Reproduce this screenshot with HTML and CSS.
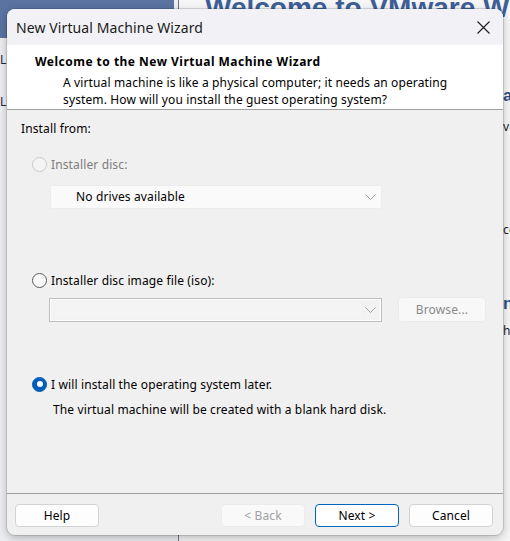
FILE: index.html
```html
<!DOCTYPE html>
<html>
<head>
<meta charset="utf-8">
<link rel="stylesheet" href="styles.css">
</head>
<body>
<div class="app">
  <aside class="sidebar">
    <div class="side-head"></div>
    <div class="side-item s1">Library</div>
    <div class="side-item s2">Library</div>
  </aside>
  <main class="home">
    <h1 class="home-title">Welcome to VMware Workstation</h1>
    <div class="home-col">
      <div class="frag-h f1">about</div>
      <div class="frag f2">view</div>
      <div class="frag f3">connect</div>
      <div class="frag-h f4">new</div>
      <div class="frag f5">help</div>
    </div>
  </main>
</div>

<div class="dialog">
  <div class="titlebar">
    <span class="title">New Virtual Machine Wizard</span>
    <svg class="close" width="13" height="13" viewBox="0 0 13 13"><path d="M0.5 0.5 L12.5 12.5 M12.5 0.5 L0.5 12.5" stroke="#1b1b1b" stroke-width="1.1" fill="none"/></svg>
  </div>
  <div class="header">
    <div class="h-title">Welcome to the New Virtual Machine Wizard</div>
    <div class="h-desc">A virtual machine is like a physical computer; it needs an operating<br>system. How will you install the guest operating system?</div>
  </div>
  <div class="body">
    <div class="lbl">Install from:</div>
    <div class="radio-row disabled r1"><span class="radio"></span><span>Installer disc:</span></div>
    <div class="select">
      <span class="select-text">No drives available</span>
      <svg class="chev" width="11" height="6" viewBox="0 0 11 6"><path d="M0.5 0.5 L5.5 5.5 L10.5 0.5" stroke="#a0a0a0" stroke-width="1" fill="none"/></svg>
    </div>
    <div class="radio-row r2"><span class="radio"></span><span>Installer disc image file (iso):</span></div>
    <div class="iso-row">
      <div class="combo">
        <div class="combo-field"></div>
        <svg class="chev" width="11" height="6" viewBox="0 0 11 6"><path d="M0.5 0.5 L5.5 5.5 L10.5 0.5" stroke="#a0a0a0" stroke-width="1" fill="none"/></svg>
      </div>
      <div class="btn browse">Browse...</div>
    </div>
    <div class="radio-row r3"><span class="radio checked"></span><span>I will install the operating system later.</span></div>
    <div class="note">The virtual machine will be created with a blank hard disk.</div>
  </div>
  <div class="footer">
    <div class="btn">Help</div>
    <div class="spacer"></div>
    <div class="btn disabled">&lt; Back</div>
    <div class="btn primary">Next &gt;</div>
    <div class="btn">Cancel</div>
  </div>
</div>
</body>
</html>
```
FILE: styles.css
```css
* { box-sizing: border-box; }
html, body {
  margin: 0;
  padding: 0;
  width: 510px;
  height: 541px;
  overflow: hidden;
  font-family: "Noto Sans", "Segoe UI", sans-serif;
  font-size: 12px;
  letter-spacing: 0.13px;
  color: #000;
}

/* background application */
.app {
  display: flex;
  width: 510px;
  height: 541px;
  background: #f6f6f7;
}
.sidebar {
  width: 179px;
  flex: none;
  background: #eceef2;
  border-right: 1px solid #707479;
  padding-right: 4px;
  overflow: hidden;
}
.side-head {
  height: 38px;
  background: #5a73a1;
}
.side-item {
  width: 12px;
  overflow: hidden;
  font-size: 12px;
  letter-spacing: 0;
  line-height: 18px;
  color: #1a2540;
  white-space: nowrap;
}
.s1 { margin-top: 13px; }
.s2 { margin-top: 24px; }

.home {
  flex: 1;
  overflow: hidden;
}
.home-title {
  margin: -6px 0 0 26px;
  font-family: "Liberation Sans", Arial, sans-serif;
  font-size: 28px;
  line-height: 28px;
  font-weight: bold;
  letter-spacing: 0;
  color: #3e5f97;
  white-space: nowrap;
}
.home-col {
  margin-left: 324px;
  white-space: nowrap;
}
.frag-h {
  font-family: "Liberation Sans", Arial, sans-serif;
  font-size: 17px;
  font-weight: bold;
  color: #2c4f88;
  line-height: 20px;
}
.frag {
  font-size: 12px;
  line-height: 16px;
  color: #1a1a2a;
}
.f1 { margin-top: 64px; }
.f2 { margin-top: 13px; }
.f3 { margin-top: 87px; }
.f4 { margin-top: 56px; }
.f5 { margin-top: 9px; }

/* dialog */
.dialog {
  position: absolute;
  left: 7px;
  top: 9px;
  width: 496px;
  height: 526px;
  background: #f0f0f0;
  border-radius: 8px;
  overflow: hidden;
  display: flex;
  flex-direction: column;
  box-shadow: 0 0 0 1px rgba(0,0,0,0.12), 0 3px 10px rgba(0,0,0,0.25);
}
.titlebar {
  height: 36px;
  flex: none;
  background: #f2f1f6;
  display: flex;
  align-items: center;
  padding-left: 9px;
  position: relative;
}
.title {
  font-size: 14px;
  letter-spacing: 0.1px;
  color: #1a1a1a;
  line-height: 20px;
  margin-top: 1px;
}
.close {
  position: absolute;
  left: 470px;
  top: 12px;
}
.header {
  height: 65px;
  flex: none;
  background: #ffffff;
  border-bottom: 1px solid #a0a0a0;
  padding: 9px 0 0 28px;
}
.h-title {
  font-weight: bold;
  letter-spacing: 0.48px;
  line-height: 16px;
}
.h-desc {
  margin: 4px 0 0 28px;
  line-height: 17px;
}

.body {
  flex: 1;
  padding: 8px 0 0 14px;
  display: flex;
  flex-direction: column;
  align-items: flex-start;
}
.lbl { line-height: 20px; margin-top: 1px; }

.radio-row {
  display: flex;
  align-items: center;
  gap: 4px;
  height: 20px;
  margin-left: 11px;
  white-space: nowrap;
}
.radio {
  width: 15px;
  height: 15px;
  border-radius: 50%;
  border: 1px solid #5b5b5b;
  background: #f8f8f8;
  flex: none;
  position: relative;
}
.disabled { color: #7d7d7d; }
.disabled .radio {
  border-color: #cacaca;
  background: #f4f4f4;
}
.radio.checked {
  background: #005fb8;
  border-color: #005fb8;
}
.radio.checked::after {
  content: "";
  position: absolute;
  left: 3.5px;
  top: 3.5px;
  width: 6px;
  height: 6px;
  border-radius: 50%;
  background: #ffffff;
}
.r1 { margin-top: 15px; }
.r2 { margin-top: 61px; }
.r3 { margin-top: 52px; }

.select {
  margin: 11px 0 0 29px;
  width: 332px;
  height: 24px;
  background: #fafafa;
  border: 1px solid #ececec;
  border-radius: 2px;
  display: flex;
  align-items: center;
  justify-content: space-between;
  padding: 0 5px 0 25px;
}
.select-text { line-height: 16px; }

.iso-row {
  margin: 7px 0 0 28px;
  display: flex;
  align-items: center;
  gap: 16px;
}
.combo {
  width: 333px;
  height: 24px;
  border: 1px solid #bdbdbd;
  background: #f2f2f2;
  box-shadow: inset 0 0 0 1px #ffffff;
  display: flex;
  align-items: center;
  padding: 1px 5px 1px 2px;
  gap: 4px;
}
.combo-field {
  flex: 1;
  height: 18px;
  background: #f4f4f4;
}

.btn {
  height: 23px;
  width: 84px;
  border: 1px solid #d3d3d3;
  border-radius: 4px;
  background: #fdfdfd;
  display: flex;
  align-items: center;
  justify-content: center;
  line-height: 16px;
  color: #000;
}
.btn.browse {
  width: 88px;
  height: 25px;
  background: #f8f8f8;
  border-color: #ebebeb;
  color: #8a8a8a;
}
.btn.disabled {
  background: #f9f9f9;
  border-color: #ececec;
  color: #a0a0a0;
}
.btn.primary {
  border-color: #0067c0;
  background: #ffffff;
}

.note {
  margin: 6px 0 0 32px;
  line-height: 20px;
}

.footer {
  height: 42px;
  flex: none;
  border-top: 1px solid #a0a0a0;
  display: flex;
  align-items: flex-start;
  padding: 10px 10px 0 8px;
  gap: 10px;
}
.spacer { flex: 1; }
```
